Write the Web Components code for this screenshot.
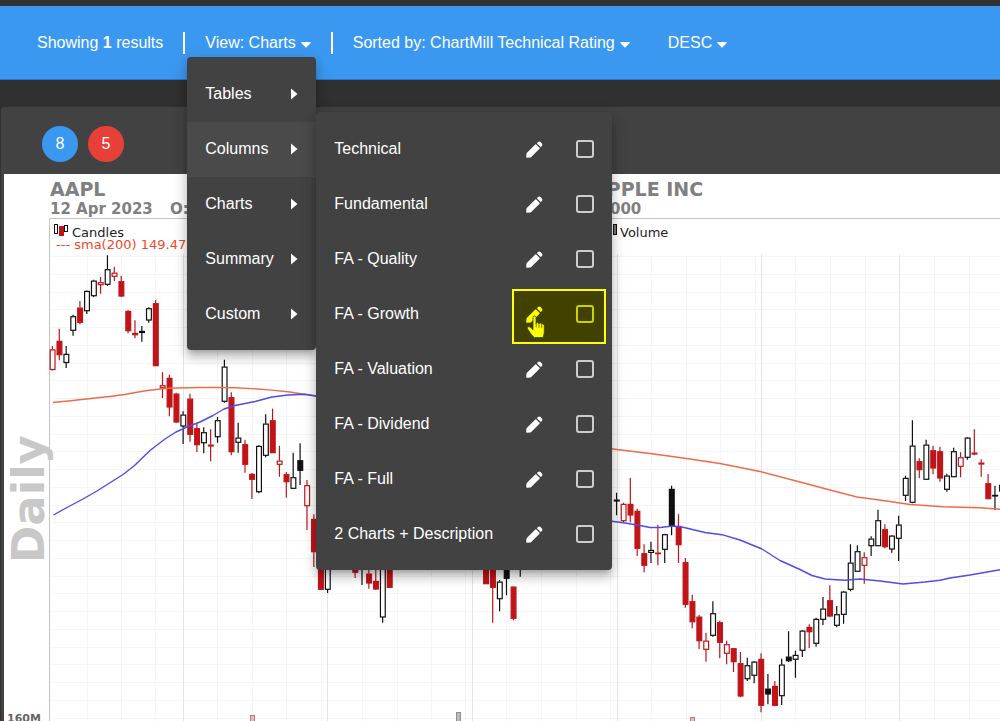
<!DOCTYPE html>
<html lang="en">
<head>
<meta charset="utf-8">
<title>Stock screener - AAPL</title>
<meta name="viewport" content="width=device-width, initial-scale=1">
<style>
  html { background: #303030; }
  body { margin: 0; font-family: "Liberation Sans", Arial, sans-serif; font-size: 16px; line-height: 20px; color: #fff; }
</style>
</head>
<body>
<screener-page>
  <results-toolbar slot="toolbar" count="1">
    <menu-trigger label="View: Charts" expanded>
      <drop-menu slot="menu">
        <menu-item label="Tables"></menu-item>
        <menu-item label="Columns" active>
          <drop-menu slot="submenu" wide>
            <column-option label="Technical"></column-option>
            <column-option label="Fundamental"></column-option>
            <column-option label="FA - Quality"></column-option>
            <column-option label="FA - Growth" highlighted></column-option>
            <column-option label="FA - Valuation"></column-option>
            <column-option label="FA - Dividend"></column-option>
            <column-option label="FA - Full"></column-option>
            <column-option label="2 Charts + Description"></column-option>
          </drop-menu>
        </menu-item>
        <menu-item label="Charts"></menu-item>
        <menu-item label="Summary"></menu-item>
        <menu-item label="Custom"></menu-item>
      </drop-menu>
    </menu-trigger>
    <bar-divider></bar-divider>
    <menu-trigger label="Sorted by: ChartMill Technical Rating"></menu-trigger>
    <menu-trigger label="DESC" spaced></menu-trigger>
  </results-toolbar>
  <result-card>
    <score-badge slot="scores" kind="technical">8</score-badge>
    <score-badge slot="scores" kind="fundamental">5</score-badge>
    <stock-chart symbol="AAPL" company="APPLE INC"></stock-chart>
  </result-card>
</screener-page>

<script>
function define(name, html, setup) {
  const template = document.createElement('template');
  template.innerHTML = html;
  customElements.define(name, class extends HTMLElement {
    constructor() {
      super();
      this.attachShadow({ mode: 'open' }).append(template.content.cloneNode(true));
    }
    connectedCallback() {
      if (setup && !this.ready) { this.ready = true; setup(this, this.shadowRoot); }
    }
  });
}

define('screener-page', `
  <style>
    :host { display: flex; flex-direction: column; min-height: 100vh; overflow: hidden; }
    header { border-top: 6px solid #323232; }
    main { margin-top: 27px; flex: 1; }
  </style>
  <header><slot name="toolbar"></slot></header>
  <main><slot></slot></main>`);

define('bar-divider', `
  <style>:host { display: block; width: 2px; height: 22px; background: #fff; }</style>`);

define('results-toolbar', `
  <style>
    :host { display: flex; align-items: center; gap: 20px; box-sizing: border-box; min-height: 74px;
      padding: 0 37px; background: #3b98f0; border-bottom: 1px solid #2c76bb; white-space: nowrap; }
    p { margin: 0; }
  </style>
  <p>Showing <b></b> results</p>
  <bar-divider></bar-divider>
  <slot></slot>`, (host, root) => {
  root.querySelector('b').textContent = host.getAttribute('count');
});

define('menu-trigger', `
  <style>
    :host { display: block; position: relative; }
    :host([spaced]) { margin-left: 18px; }
    button { display: flex; align-items: center; gap: 5px; padding: 0; border: 0; background: none;
      color: inherit; font: inherit; cursor: pointer; }
    svg { width: 10px; height: 6px; fill: #fff; margin-top: 4px; }
    .menu { position: absolute; z-index: 2; top: 24px; left: -18px; }
  </style>
  <button type="button" aria-haspopup="true"><span></span><svg viewBox="0 0 10 6" aria-hidden="true"><path d="M.8 0h8.4q.9.3.4 1L5.6 5.2Q5 5.700 4.400 5.200L.4 1Q-.1.3.8 0z"/></svg></button>
  <div class="menu"><slot name="menu"></slot></div>`, (host, root) => {
  root.querySelector('span').textContent = host.getAttribute('label');
  root.querySelector('button').setAttribute('aria-expanded', host.hasAttribute('expanded'));
});

define('drop-menu', `
  <style>
    :host { display: block; width: 129px; box-sizing: border-box; padding: 10px 0 8px; border-radius: 4px; background: #424242;
      box-shadow: 0 5px 5px -3px rgba(0,0,0,.2), 0 8px 10px 1px rgba(0,0,0,.14), 0 3px 14px 2px rgba(0,0,0,.12); }
    :host([wide]) { width: 296px; }
  </style>
  <slot></slot>`);

define('menu-item', `
  <style>
    :host { display: block; position: relative; }
    :host([active]) button { background: #4a4a4a; }
    button { display: flex; align-items: center; justify-content: space-between; width: 100%; height: 55px;
      padding: 0 18px; border: 0; background: none; color: inherit; font: inherit; cursor: pointer; }
    svg { width: 7px; height: 12px; fill: #fff; }
    .submenu { position: absolute; z-index: 3; left: 100%; top: -10px; }
  </style>
  <button type="button"><span></span><svg viewBox="0 0 7 12" aria-hidden="true"><path d="M0 .5v11L6.500 6z"/></svg></button>
  <div class="submenu"><slot name="submenu"></slot></div>`, (host, root) => {
  root.querySelector('span').textContent = host.getAttribute('label');
});

define('column-option', `
  <style>
    :host { display: flex; align-items: center; height: 55px; padding-left: 18px; --ink: #fff; --box: #ccc; }
    :host([highlighted]) { --ink: #ff0; --box: #d0d000; }
    label { flex: 1; }
    .tools { position: relative; isolation: isolate; display: flex; align-items: center; justify-content: space-between;
      box-sizing: border-box; width: 94px; height: 55px; margin-right: 6px; padding: 0 12px 0 14px; }
    :host([highlighted]) .tools::before { content: ""; position: absolute; z-index: -1; inset: 2px 0 -2px;
      background: #424200; border: 2px solid #ff0; }
    button { display: block; padding: 0; border: 0; background: none; color: var(--ink); cursor: pointer; }
    .pencil { display: block; width: 17px; height: 17px; fill: currentColor; }
    input { appearance: none; margin: 0; width: 18px; height: 18px; border: 2px solid var(--box); border-radius: 3px; }
    .hand { display: none; position: absolute; left: 14px; top: 28px; width: 20px; height: 24px; fill: #ff0; stroke: #424200; }
    :host([highlighted]) .hand { display: block; }
  </style>
  <label for="pick"></label>
  <div class="tools">
    <button type="button"><svg class="pencil" viewBox="0 0 17 17" aria-hidden="true"><path d="M.5 12.600Q.5 12.200 1 11.700L9.300 3.400Q9.800 3 10.300 3.500L13.500 6.700Q14 7.200 13.500 7.700L5.200 16Q4.700 16.500 4 16.500L1 16.700Q.2 16.800.2 16zM11.300 1.800 12 1.100Q13.200 0 14.500 1.100L15.900 2.500Q17 3.800 15.900 5L15.200 5.700Q14.700 6.100 14.200 5.600L11.300 2.700Q10.900 2.200 11.300 1.800z"/></svg></button>
    <input type="checkbox" id="pick">
    <svg class="hand" viewBox="0 0 20 24" aria-hidden="true"><path stroke-width=".8" d="M7 2.500Q7 1 8.500 1T10 2.500V8.500Q10.200 7.500 11.400 7.500T12.900 8.900Q13.200 8 14.300 8T15.700 9.400Q16.200 8.700 17.100 9 18.300 9.300 18.300 10.700V16.500Q18.300 19 17 22.500H8.300Q5.800 20.500 4 17.500L1.500 13.800Q.8 12.500 1.900 11.900T4.400 12.300L7 14.700z"/><path fill="none" stroke-width=".7" d="M10.200 8v4.500M13 9v3.800M15.700 9.700v3.600"/></svg>
  </div>`, (host, root) => {
  const name = host.getAttribute('label');
  root.querySelector('label').textContent = name;
  root.querySelector('button').setAttribute('aria-label', 'Edit ' + name);
});

define('score-badge', `
  <style>
    :host { display: grid; place-items: center; width: 36px; height: 36px; border-radius: 50%; background: #3b98f0; }
    :host([kind="fundamental"]) { background: #e83f38; }
  </style>
  <slot></slot>`);

define('result-card', `
  <style>
    :host { display: block; margin-left: 1px; padding-left: 3px; border-radius: 4px 0 0 0; background: #424242; }
    .scores { display: flex; gap: 10px; padding: 19px 38px 12px; }
  </style>
  <div class="scores"><slot name="scores"></slot></div>
  <slot></slot>`);

/* One entry per trading day: slot index, kind, high, body top, body bottom, low.
   r = filled red, R = hollow red, w = hollow black, b = filled black. */
const CANDLES = `
0 R 346 349.5 369.5 370.5;1 r 328.7 341 354.7 360.3;2 w 346 354 362.5 368;3 w 314.7 316.3 330.3 335.7;4 r 301 307.7 322.3 324.3;
5 w 290.5 291 310.7 314;6 w 279.7 280.7 295.7 297;7 R 277 282.3 284.3 293.7;8 w 255.3 269.3 284.3 285.7;9 R 266.7 272.7 276.3 281;
10 r 275.7 281.3 296 297;11 r 310.3 311 330.7 333.3;12 r 320.3 333 334.7 338.3;13 b 326 331 332.5 341.7;14 w 307.3 308.3 320 322.7;
15 r 300 303.3 365.7 365.7;16 R 372.3 385.3 387.3 398;17 r 374.7 378 407 416.3;18 r 392.7 393.7 422 422.7;19 w 411.3 414.7 426 444;
20 r 393.7 398.7 434.3 441.7;21 r 423.3 428.3 444.7 452;22 w 427.3 432.3 442.7 453.3;23 r 429.3 444.7 446 461.3;24 w 417 420.3 436.7 442.7;
25 w 359.7 366.7 401.3 402.7;26 r 392.3 397.3 451.7 455.3;27 w 422.7 437.7 442.3 452.7;28 r 439.7 444.3 464.3 472.7;29 r 473 474 479.3 499;
30 w 445.3 446 491.7 493.3;31 w 414.3 423.7 455.3 457.3;32 r 408.7 420.3 452.7 452.7;33 R 445.7 460.7 464.3 476.7;34 r 472 474.3 481.7 497.7;
35 w 452.7 477.3 488.3 488.3;36 b 443.3 460.3 470.3 485;37 R 480 485.3 505.7 530;38 r 514.3 519 551.7 567;39 r 545 550 589.3 590;
40 w 545 550 589.3 593;41 w 548 552 562 566;42 r 540 546 558 564;43 r 542 550 560 566;44 r 548 555 572.3 578;45 w 545 550 564 585;
46 r 560 573.7 583 588.7;47 r 560 581 589 590;48 w 548 552 617 622.7;49 r 540 546 587.3 588;
63 r 540 545 583.7 584;64 r 545 550 587.3 622.7;65 w 580 581.7 598.7 611.3;66 b 550 556 578.3 595.3;67 r 586.5 586.7 618.3 620.3;68 w 540 545 562 576.7;
82 b 492.7 499.7 501 515.3;83 R 502.7 504 520.7 522.3;84 r 477.7 504 515 522.3;85 r 508.7 511 548.3 556;86 r 544.3 553.3 565.3 572.3;
87 w 541.7 550 552.3 563;88 r 524.7 552.7 553.7 565.3;89 w 533.7 534.3 549.3 563;90 b 485.7 489 526 535.3;91 r 514.3 526 544.7 563;
92 r 558 562.3 604.3 607.7;93 r 594.7 601.3 621.7 628.3;94 r 615 616.7 640.7 649;95 R 632.7 640.7 649.3 661.7;96 w 601.3 613.3 635.3 636.7;
97 r 620.7 622.3 642.3 658.3;98 R 640.7 644.3 653.3 664.3;99 r 648.3 648.3 661.7 672;100 r 652 663.3 696 697.3;101 w 657.7 665.3 678.7 681;
102 w 661 661.7 675.3 683.3;103 r 653.3 659 705.3 712.3;104 b 674 688.7 694 704.3;105 r 681 686 705.3 706.3;106 w 658.7 664.7 695.7 705;
107 b 631.3 656.7 660.7 662;108 w 650.7 655 659.3 677.7;109 w 630 630.7 650.3 657;110 r 624.3 627 631.7 648;111 w 617.7 619 643.3 646.7;
112 w 597 608.7 619.3 625;113 r 585.3 600.3 616 617;114 w 606 614.3 625.3 627.3;115 w 591 591.7 614.3 623.7;116 w 544.3 562.7 589.3 591.3;
117 w 545.3 551.3 571.3 571.5;118 R 552.3 557.3 565.3 583.7;119 w 536.3 538.7 545.7 556;120 w 509.7 520.3 545.7 546;121 r 524.3 529.3 546.7 548.3;
122 w 535 535.7 549 552.7;123 w 515.7 524.7 538.3 561;124 w 475.7 478 495.3 501;125 w 420.3 445.7 502.3 503.3;126 r 458.3 461.3 469.7 478.3;
127 w 439.7 444.7 479.3 479.5;128 r 445.7 450.3 468 474.3;129 r 446.7 451.3 478 481.7;130 w 473.7 475.7 489.3 491.7;131 w 447.7 451.3 476.7 477;
132 R 452.3 457.3 466.3 477.3;133 w 437 437.7 457.3 459.7;134 r 429.3 452.7 454 455.3;135 r 459.3 462.7 464 476.7;136 r 474 483.3 498.7 498.7;
137 b 485.7 495 496 510;138 w 470 485 491 500`;

const RED = '#c01418', BLACK = '#101010';

function candleShapes() {
  return CANDLES.split(';').map(row => {
    const [index, kind, high, top, bottom, low] = row.trim().split(/\s+/).map((v, i) => i === 1 ? v : Number(v));
    const x = 52.4 + 6.88 * index;
    const ink = kind === 'r' || kind === 'R' ? RED : BLACK;
    const hollow = kind === 'R' || kind === 'w';
    const wick = `<path d="M${x} ${high}V${top}M${x} ${bottom}V${low}"/>`;
    const body = hollow
      ? `<rect x="${x - 2.2}" y="${top + .4}" width="4.8" height="${Math.max(bottom - top - .4, 2)}" fill="#fff"/>`
      : `<rect x="${x - 2.2}" y="${top + .4}" width="4.8" height="${Math.max(bottom - top - .4, .6)}" fill="${ink}"/>`;
    return `<g stroke="${ink}" stroke-width="1.2">${wick}${body}</g>`;
  }).join('');
}

function gridLines() {
  let out = '';
  for (let i = 0; i <= 26; i++) {
    const y = Math.round(256 + 17.75 * i) + .5;
    out += `<path stroke="#f5f5f5" d="M50 ${y}H4000"/>`;
  }
  for (const x of [87, 121, 155, 217, 252, 286, 321, 362, 397, 431, 465, 506, 541, 576, 610, 651, 686, 720, 755, 795, 830, 865, 934, 969])
    out += `<path stroke="#f5f5f5" d="M${x}.5 256V800"/>`;
  for (const x of [183, 327, 472, 617, 761, 899])
    out += `<path stroke="#e4e4e4" d="M${x}.5 254V800"/>`;
  return out;
}

define('stock-chart', `
  <style>
    :host { display: block; background: #fff; color: #808080; font-family: "DejaVu Sans", Verdana, sans-serif; font-weight: bold; }
    .head { display: grid; grid-template-columns: 542px auto; justify-content: start; padding: 3px 0 0 46px; font-size: 19px; line-height: 24px; white-space: nowrap; }
    .quote { display: grid; grid-template-columns: 120px 440px auto; justify-content: start; padding-left: 46px; font-size: 15px; line-height: 17px; }
    svg { display: block; width: 100%; height: 503px; overflow: hidden; }
    text { font-size: 13px; font-weight: normal; white-space: pre; }
    .watermark { font-size: 45px; font-weight: bold; fill: #c8c8c8; }
    .axis { font-size: 11px; font-weight: bold; fill: #666; }
  </style>
  <div class="head"><span class="symbol"></span><span class="company"></span></div>
  <div class="quote"><span>12 Apr 2023</span><span>O:</span><span>000</span></div>
  <svg role="img" aria-label="Daily candlestick chart">
    <g transform="translate(-4 -218)" fill="none">
      <path stroke="#c4c4c4" d="M49.500 800V218.500H4000"/>
      <g class="grid"></g>
      <g stroke="#c07878" fill="#eeb8b8">
        <rect x="250.500" y="715.500" width="4" height="40"/>
        <rect x="690.500" y="717.500" width="4" height="40"/>
        <rect x="456.500" y="712.500" width="4" height="40" stroke="#909090" fill="#bbb"/>
      </g>
      <g class="candles"></g>
      <g stroke="#f06a4a" stroke-width="1.4">
        <path d="M53 402.500C72 401 95 398 110 396.500S140 391 160 389 190 387.500 215 387.500 260 388.500 290 392L330 398.500"/>
        <path d="M600 447.500 650 453.500 683 458 720 463.500 760 471.500 800 482 830 490 857 497 883 500.500 910 504.500 943 506.700 980 507.700 1004 509.500"/>
      </g>
      <g stroke="#4c4cea" stroke-width="1.4" stroke-linejoin="round">
        <path d="M53.500 515 67 507.500 83 499 97 491 108 484 123 474.500 134 466 150 450.500 165 439 176 432 187 427 200 422 213 415.500 224 409 235 405.500 255 401.500 272 397 288 395 305 394.300 330 398"/>
        <path d="M600 520 612 521.300 625 523 640 525.500 650 527.500 660 527.500 673 526 683 527.300 705 532.500 722 534.700 740 540 762 549 780 560.500 800 569.500 812 575.500 825 579 845 580.300 860 579 880 581 903 584 925 582 940 580.300 950 578 970 575 1004 569"/>
      </g>
      <g stroke="#111">
        <rect x="54.500" y="224.500" width="3" height="9"/><rect x="64.500" y="225.500" width="3" height="6"/>
        <rect x="59.500" y="226.500" width="4" height="9" stroke="#c01418" fill="#c01418"/>
        <rect x="613.500" y="224.500" width="3" height="10" fill="#777"/>
      </g>
      <text x="72" y="237" fill="#222">Candles</text>
      <text x="56" y="249" fill="#f04a28">--- sma(200) 149.47</text>
      <text x="620" y="237" fill="#222">Volume</text>
      <text class="axis" x="7" y="722">160M</text>
      <text class="watermark" transform="translate(44 563) rotate(-90)">Daily</text>
    </g>
  </svg>`, (host, root) => {
  root.querySelector('.symbol').textContent = host.getAttribute('symbol');
  root.querySelector('.company').textContent = host.getAttribute('company');
  root.querySelector('.grid').innerHTML = gridLines();
  root.querySelector('.candles').innerHTML = candleShapes();
});
</script>
</body>
</html>
